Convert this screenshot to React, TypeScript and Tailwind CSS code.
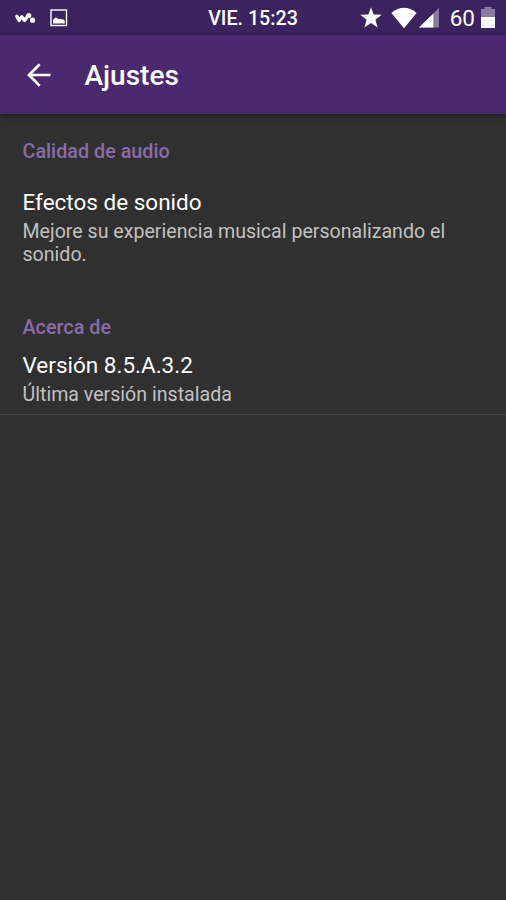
import type { ReactNode } from "react";

interface PreferenceProps {
  title: string;
  summary: string;
  className?: string;
}

const CategoryTitle = ({ children }: { children: ReactNode }) => (
  <h2 className="text-[19.8px] leading-[23px] font-medium text-[#8a6cab]">{children}</h2>
);

const Preference = ({ title, summary, className = "" }: PreferenceProps) => (
  <div className={className}>
    <p className="text-[22.5px] leading-[26px] text-white">{title}</p>
    <p className="mt-[5px] text-[19.6px] leading-[23px] text-[#c1c1c1]">{summary}</p>
  </div>
);

const StatusBar = () => (
  <div className="grid h-[35px] grid-cols-[1fr_auto_1fr] items-center bg-[#3b235f] text-white">
    <div className="flex items-center">
      <svg className="ml-[14px]" width="22" height="14" viewBox="0 0 22 14" fill="none">
        <path
          d="M2.8 5.2 5 9.4l2.8-3.6 2.8 3.6 3.4-4.6"
          stroke="currentColor"
          strokeWidth="3.3"
          strokeLinecap="round"
          strokeLinejoin="round"
        />
        <circle cx="14.8" cy="4.4" r="2.5" fill="currentColor" />
        <circle cx="18.6" cy="9.2" r="2.6" fill="currentColor" />
      </svg>
      <svg className="ml-[14px]" width="18" height="18" viewBox="0 0 18 18" fill="none">
        <rect x="1" y="1" width="15.5" height="15.5" stroke="currentColor" strokeWidth="1.4" />
        <path
          d="M3 14.4v-2.9c0-1.2.8-1.9 1.6-2.1.6-.9 1.6-1.1 2.4-.5.7.3 1 .9 1.5 1.3.9-.7 2-.6 2.7.2 1.3-.5 3.3.2 3.5 1.6v2.4Z"
          fill="currentColor"
        />
      </svg>
    </div>
    <span className="pt-[2px] text-[19.7px] leading-[24px] font-medium">VIE. 15:23</span>
    <div className="flex items-center justify-end pr-[11px]">
      <svg width="22" height="22" viewBox="0 0 22 22" fill="currentColor">
        <path d="m11 .2 2.7 7.3 8 .3-6.3 4.9 2.3 7.8-6.7-4.4-6.7 4.4 2.3-7.8L.3 7.8l8-.3Z" />
      </svg>
      <svg className="ml-[9px]" width="26" height="22" viewBox="0 0 26 22" fill="currentColor">
        <path d="M.4 5.9Q13-4.3 25.6 5.9L13 21.2Z" />
      </svg>
      <svg className="ml-[2px]" width="20" height="20" viewBox="0 0 20 20" fill="currentColor">
        <path d="M0 19.5 20 0v19.5Z" opacity=".4" />
        <path d="M0 19.5 14.4 5.5v14Z" />
      </svg>
      <span className="ml-[11px] text-[22.5px] leading-[26px]">60</span>
      <svg className="ml-[6px]" width="14" height="22" viewBox="0 0 14 22" fill="currentColor">
        <path d="M0 2h3.5V0h7v2H14v8H0Z" opacity=".4" />
        <path d="M0 10h14v11H0Z" />
      </svg>
    </div>
  </div>
);

export default function App() {
  return (
    <div className="flex h-[900px] w-[506px] flex-col overflow-hidden bg-[#303030] font-['Roboto',sans-serif]">
      <StatusBar />
      <header className="flex h-[79px] items-center bg-[#4a296e] pl-[27px] text-white shadow-[0_2px_6px_rgba(0,0,0,0.45)]">
        <svg width="24" height="24" viewBox="0 0 24 24" fill="none" stroke="currentColor" strokeWidth="2.7">
          <path d="M23.5 12h-21M12.7 1.3 2 12l10.7 10.7" />
        </svg>
        <h1 className="ml-[33.5px] pt-[2px] text-[28px] leading-[33px] font-medium">Ajustes</h1>
      </header>
      <main className="flex-1">
        <section className="px-[22.5px] pt-[26px]">
          <CategoryTitle>Calidad de audio</CategoryTitle>
          <Preference
            className="mt-[26px]"
            title="Efectos de sonido"
            summary="Mejore su experiencia musical personalizando el sonido."
          />
        </section>
        <section className="mt-[50px] border-b border-[#494949] px-[22.5px] pb-[8px]">
          <CategoryTitle>Acerca de</CategoryTitle>
          <Preference className="mt-[13px]" title="Versión 8.5.A.3.2" summary="Última versión instalada" />
        </section>
      </main>
    </div>
  );
}
